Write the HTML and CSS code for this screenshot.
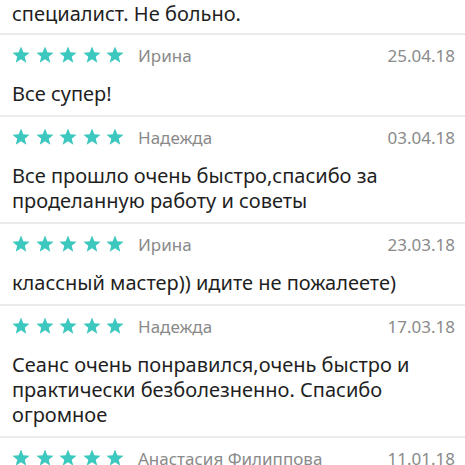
FILE: index.html
```html
<!DOCTYPE html>
<html lang="ru">
  <head>
    <meta charset="UTF-8" />
    <meta name="viewport" content="width=device-width, initial-scale=1.0" />
    <title>Отзывы</title>
    <link rel="stylesheet" href="styles.css">
  </head>
  <body>
    <section class="reviews">
      <div class="review review-tail">
        <p class="review-text">специалист. Не больно.</p>
      </div>

      <div class="review">
        <div class="review-head">
          <span class="stars">
            <svg viewBox="0 0 20 19.5"><polygon points="10,0.5 12.59,6.94 19.51,7.41 14.18,11.86 15.88,18.59 10,14.9 4.12,18.59 5.82,11.86 0.49,7.41 7.41,6.94" /></svg>
            <svg viewBox="0 0 20 19.5"><polygon points="10,0.5 12.59,6.94 19.51,7.41 14.18,11.86 15.88,18.59 10,14.9 4.12,18.59 5.82,11.86 0.49,7.41 7.41,6.94" /></svg>
            <svg viewBox="0 0 20 19.5"><polygon points="10,0.5 12.59,6.94 19.51,7.41 14.18,11.86 15.88,18.59 10,14.9 4.12,18.59 5.82,11.86 0.49,7.41 7.41,6.94" /></svg>
            <svg viewBox="0 0 20 19.5"><polygon points="10,0.5 12.59,6.94 19.51,7.41 14.18,11.86 15.88,18.59 10,14.9 4.12,18.59 5.82,11.86 0.49,7.41 7.41,6.94" /></svg>
            <svg viewBox="0 0 20 19.5"><polygon points="10,0.5 12.59,6.94 19.51,7.41 14.18,11.86 15.88,18.59 10,14.9 4.12,18.59 5.82,11.86 0.49,7.41 7.41,6.94" /></svg>
          </span>
          <span class="review-name">Ирина</span>
          <span class="review-date">25.04.18</span>
        </div>
        <p class="review-text">Все супер!</p>
      </div>

      <div class="review">
        <div class="review-head">
          <span class="stars">
            <svg viewBox="0 0 20 19.5"><polygon points="10,0.5 12.59,6.94 19.51,7.41 14.18,11.86 15.88,18.59 10,14.9 4.12,18.59 5.82,11.86 0.49,7.41 7.41,6.94" /></svg>
            <svg viewBox="0 0 20 19.5"><polygon points="10,0.5 12.59,6.94 19.51,7.41 14.18,11.86 15.88,18.59 10,14.9 4.12,18.59 5.82,11.86 0.49,7.41 7.41,6.94" /></svg>
            <svg viewBox="0 0 20 19.5"><polygon points="10,0.5 12.59,6.94 19.51,7.41 14.18,11.86 15.88,18.59 10,14.9 4.12,18.59 5.82,11.86 0.49,7.41 7.41,6.94" /></svg>
            <svg viewBox="0 0 20 19.5"><polygon points="10,0.5 12.59,6.94 19.51,7.41 14.18,11.86 15.88,18.59 10,14.9 4.12,18.59 5.82,11.86 0.49,7.41 7.41,6.94" /></svg>
            <svg viewBox="0 0 20 19.5"><polygon points="10,0.5 12.59,6.94 19.51,7.41 14.18,11.86 15.88,18.59 10,14.9 4.12,18.59 5.82,11.86 0.49,7.41 7.41,6.94" /></svg>
          </span>
          <span class="review-name">Надежда</span>
          <span class="review-date">03.04.18</span>
        </div>
        <p class="review-text">Все прошло очень быстро,спасибо за<br />проделанную работу и советы</p>
      </div>

      <div class="review">
        <div class="review-head">
          <span class="stars">
            <svg viewBox="0 0 20 19.5"><polygon points="10,0.5 12.59,6.94 19.51,7.41 14.18,11.86 15.88,18.59 10,14.9 4.12,18.59 5.82,11.86 0.49,7.41 7.41,6.94" /></svg>
            <svg viewBox="0 0 20 19.5"><polygon points="10,0.5 12.59,6.94 19.51,7.41 14.18,11.86 15.88,18.59 10,14.9 4.12,18.59 5.82,11.86 0.49,7.41 7.41,6.94" /></svg>
            <svg viewBox="0 0 20 19.5"><polygon points="10,0.5 12.59,6.94 19.51,7.41 14.18,11.86 15.88,18.59 10,14.9 4.12,18.59 5.82,11.86 0.49,7.41 7.41,6.94" /></svg>
            <svg viewBox="0 0 20 19.5"><polygon points="10,0.5 12.59,6.94 19.51,7.41 14.18,11.86 15.88,18.59 10,14.9 4.12,18.59 5.82,11.86 0.49,7.41 7.41,6.94" /></svg>
            <svg viewBox="0 0 20 19.5"><polygon points="10,0.5 12.59,6.94 19.51,7.41 14.18,11.86 15.88,18.59 10,14.9 4.12,18.59 5.82,11.86 0.49,7.41 7.41,6.94" /></svg>
          </span>
          <span class="review-name">Ирина</span>
          <span class="review-date">23.03.18</span>
        </div>
        <p class="review-text">классный мастер)) идите не пожалеете)</p>
      </div>

      <div class="review">
        <div class="review-head">
          <span class="stars">
            <svg viewBox="0 0 20 19.5"><polygon points="10,0.5 12.59,6.94 19.51,7.41 14.18,11.86 15.88,18.59 10,14.9 4.12,18.59 5.82,11.86 0.49,7.41 7.41,6.94" /></svg>
            <svg viewBox="0 0 20 19.5"><polygon points="10,0.5 12.59,6.94 19.51,7.41 14.18,11.86 15.88,18.59 10,14.9 4.12,18.59 5.82,11.86 0.49,7.41 7.41,6.94" /></svg>
            <svg viewBox="0 0 20 19.5"><polygon points="10,0.5 12.59,6.94 19.51,7.41 14.18,11.86 15.88,18.59 10,14.9 4.12,18.59 5.82,11.86 0.49,7.41 7.41,6.94" /></svg>
            <svg viewBox="0 0 20 19.5"><polygon points="10,0.5 12.59,6.94 19.51,7.41 14.18,11.86 15.88,18.59 10,14.9 4.12,18.59 5.82,11.86 0.49,7.41 7.41,6.94" /></svg>
            <svg viewBox="0 0 20 19.5"><polygon points="10,0.5 12.59,6.94 19.51,7.41 14.18,11.86 15.88,18.59 10,14.9 4.12,18.59 5.82,11.86 0.49,7.41 7.41,6.94" /></svg>
          </span>
          <span class="review-name">Надежда</span>
          <span class="review-date">17.03.18</span>
        </div>
        <p class="review-text">Сеанс очень понравился,очень быстро и<br />практически безболезненно. Спасибо<br />огромное</p>
      </div>

      <div class="review review-cut">
        <div class="review-head">
          <span class="stars">
            <svg viewBox="0 0 20 19.5"><polygon points="10,0.5 12.59,6.94 19.51,7.41 14.18,11.86 15.88,18.59 10,14.9 4.12,18.59 5.82,11.86 0.49,7.41 7.41,6.94" /></svg>
            <svg viewBox="0 0 20 19.5"><polygon points="10,0.5 12.59,6.94 19.51,7.41 14.18,11.86 15.88,18.59 10,14.9 4.12,18.59 5.82,11.86 0.49,7.41 7.41,6.94" /></svg>
            <svg viewBox="0 0 20 19.5"><polygon points="10,0.5 12.59,6.94 19.51,7.41 14.18,11.86 15.88,18.59 10,14.9 4.12,18.59 5.82,11.86 0.49,7.41 7.41,6.94" /></svg>
            <svg viewBox="0 0 20 19.5"><polygon points="10,0.5 12.59,6.94 19.51,7.41 14.18,11.86 15.88,18.59 10,14.9 4.12,18.59 5.82,11.86 0.49,7.41 7.41,6.94" /></svg>
            <svg viewBox="0 0 20 19.5"><polygon points="10,0.5 12.59,6.94 19.51,7.41 14.18,11.86 15.88,18.59 10,14.9 4.12,18.59 5.82,11.86 0.49,7.41 7.41,6.94" /></svg>
          </span>
          <span class="review-name">Анастасия Филиппова</span>
          <span class="review-date">11.01.18</span>
        </div>
      </div>
    </section>
  </body>
</html>
```

FILE: styles.css
```css
html,
body {
  padding: 0;
  margin: 0;
  background-color: #fff;
}

body {
  font-family: "Noto Sans", "Open Sans", sans-serif;
  color: #1f1f1f;
  overflow: hidden;
  height: 465px;
}

.reviews {
  display: flex;
  flex-direction: column;
}

.review {
  padding: 10px 10px 9px 12px;
  border-bottom: 2px solid #ebebeb;
}

.review-tail {
  padding-top: 1px;
  padding-bottom: 7px;
}

.review-cut {
  border-bottom: none;
}

.review-head {
  display: flex;
  align-items: center;
  height: 20px;
  font-size: 17px;
  color: #8a8a8a;
}

.stars {
  display: flex;
  gap: 5.5px;
  margin-right: 14px;
}

.stars svg {
  width: 18px;
  height: 17.5px;
  fill: #3cc8be;
}

.review-date {
  margin-left: auto;
}

.review-text {
  margin: 16px 0 0;
  font-size: 20px;
  line-height: 25px;
}

.review-tail .review-text {
  margin-top: 0;
}
```
